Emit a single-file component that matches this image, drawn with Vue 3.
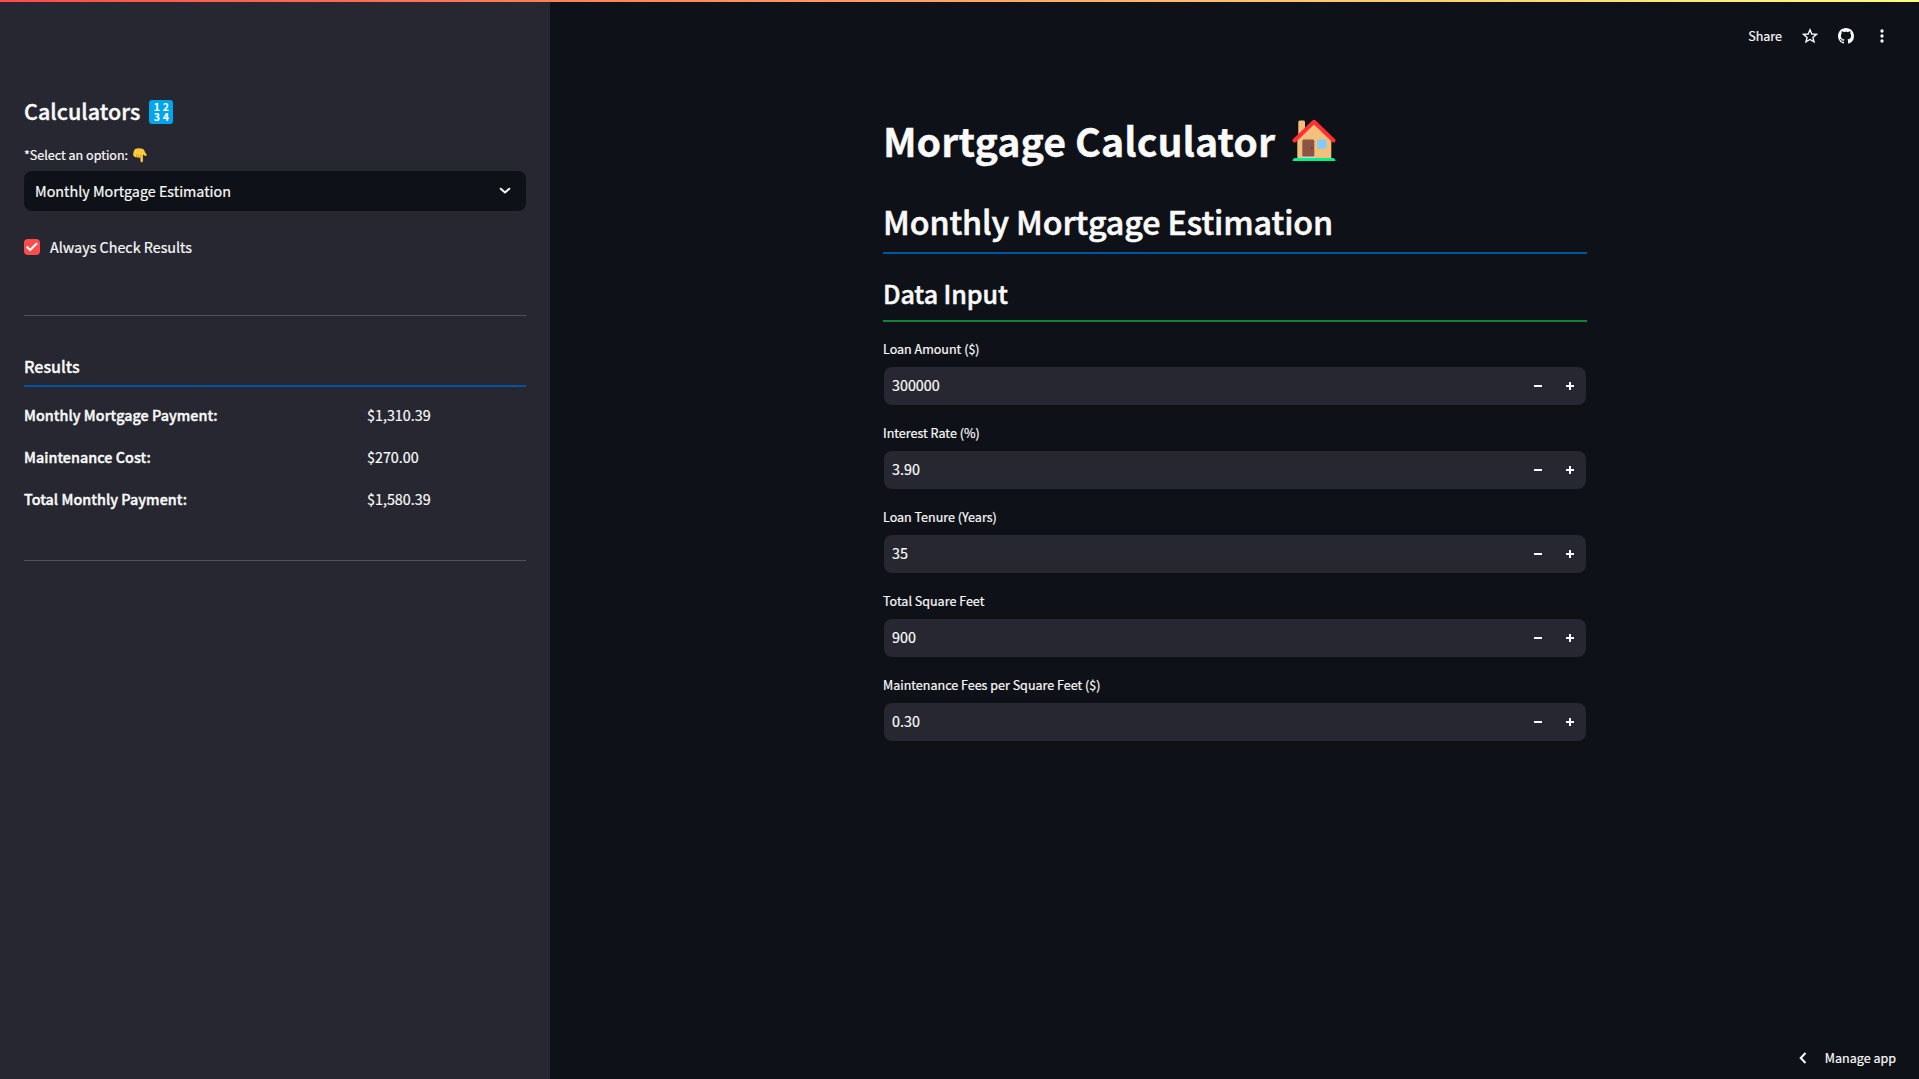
<script setup>
import { ref } from 'vue'

const results = [
  { name: 'Monthly Mortgage Payment:', value: '$1,310.39' },
  { name: 'Maintenance Cost:', value: '$270.00' },
  { name: 'Total Monthly Payment:', value: '$1,580.39' },
]

const fields = ref([
  { label: 'Loan Amount ($)', value: '300000' },
  { label: 'Interest Rate (%)', value: '3.90' },
  { label: 'Loan Tenure (Years)', value: '35' },
  { label: 'Total Square Feet', value: '900' },
  { label: 'Maintenance Fees per Square Feet ($)', value: '0.30' },
])
</script>

<template>
  <div class="app">
    <aside class="sidebar">
      <h2 class="side-title">
        <span>Calculators</span>
        <span class="keypad"><i>1</i><i>2</i><i>3</i><i>4</i></span>
      </h2>
      <div class="side-label">
        <span>*Select an option:</span>
        <svg class="hand" viewBox="0 0 14 15">
          <path fill="#ffc83d" d="M2.6 .8C4.2 0 7.4-.1 9.4.7c1.5.6 2 1.8 2.4 3l1.6 2.5c.7 1.2-.5 2.2-1.5 1.5L9.9 6.400V13c0 1.8-2.300 1.800-2.400 0L7.300 9.200C6.900 10.100 5.700 10 5.400 9.300 4.900 9.800 3.800 9.700 3.500 9 2.700 9.500 1.500 9.200 1.300 8.300.3 8.100 0 7.200.2 6.200.5 4.200.8 1.800 2.600.8z" />
          <path fill="none" stroke="#d67d00" stroke-width=".6" d="M3.500 8.800V6.600M5.500 9.100V6.800M7.500 9.300V7.200" />
        </svg>
      </div>
      <div class="select">
        <span>Monthly Mortgage Estimation</span>
        <svg width="12" height="8" viewBox="0 0 12 8"><path d="M1.700 1.700 6 5.500l4.300-3.800" fill="none" stroke="#fafafa" stroke-width="2" stroke-linecap="round" /></svg>
      </div>
      <label class="check">
        <span class="box"><svg width="16" height="16" viewBox="0 0 16 16"><path d="M2.700 7.600 6.200 11 13 4.200" fill="none" stroke="#fafafa" stroke-width="2.200" /></svg></span>
        <span>Always Check Results</span>
      </label>
      <hr class="rule first">
      <h4 class="results">Results</h4>
      <div class="rows">
        <div v-for="r in results" :key="r.name" class="row">
          <strong>{{ r.name }}</strong><span>{{ r.value }}</span>
        </div>
      </div>
      <hr class="rule second">
    </aside>

    <main class="main">
      <header class="toolbar">
        <span class="share">Share</span>
        <svg class="star" width="16" height="16" viewBox="0 0 16 16"><path d="M8 1.800 9.800 6l4.600.4-3.500 3 1.100 4.500L8 11.500l-4 2.400 1.100-4.500-3.500-3L6.200 6z" fill="none" stroke="#fafafa" stroke-width="1.400" /></svg>
        <svg class="github" width="16" height="16" viewBox="0 0 16 16"><path fill="#fafafa" d="M8 0C3.580 0 0 3.580 0 8c0 3.540 2.290 6.530 5.470 7.590.4.070.55-.17.55-.38 0-.19-.01-.82-.01-1.490-2.010.37-2.530-.49-2.690-.94-.09-.23-.48-.94-.82-1.130-.28-.15-.68-.52-.01-.53.63-.01 1.080.58 1.230.82.72 1.210 1.870.87 2.330.66.07-.52.28-.87.51-1.070-1.780-.2-3.640-.89-3.640-3.950 0-.87.31-1.590.82-2.150-.08-.2-.36-1.020.08-2.120 0 0 .67-.21 2.200.82.64-.18 1.320-.27 2-.27s1.360.09 2 .27c1.530-1.040 2.200-.82 2.200-.82.44 1.100.16 1.920.08 2.120.51.56.82 1.270.82 2.150 0 3.070-1.870 3.750-3.650 3.950.29.25.54.73.54 1.480 0 1.070-.01 1.930-.01 2.200 0 .21.15.46.55.38A8.010 8.010 0 0 0 16 8c0-4.420-3.580-8-8-8z" /></svg>
        <svg class="dots" width="4" height="16" viewBox="0 0 4 16" fill="#fafafa"><circle cx="2" cy="3" r="1.650" /><circle cx="2" cy="8" r="1.650" /><circle cx="2" cy="13" r="1.650" /></svg>
      </header>

      <section class="content">
        <h1 class="title">
          <span>Mortgage Calculator</span>
          <svg class="house" width="44" height="43" viewBox="0 0 44 43">
            <path fill="#f3c07b" d="M6.300 3Q6.300 1.500 7.800 1.500h3.800Q13 1.500 13 3v12H6.300z" />
            <path fill="#f3c07b" d="M5.300 20 22 3.500 39.300 20v19.500H5.300z" />
            <path fill="none" stroke="#ff3034" stroke-width="4" stroke-linecap="round" stroke-linejoin="round" d="M2.500 21.500 22 2.800l19.500 18.700" />
            <rect x="10.300" y="20.500" width="12" height="18" rx="1.500" fill="#8c5543" />
            <circle cx="19.800" cy="29" r=".8" fill="#402a32" />
            <rect x="25.300" y="20.500" width="9" height="9.200" rx="1" fill="#83cbff" />
            <path fill="#d3d3d3" d="M9.300 37.500h14v2h-14z" />
            <path fill="#00f08c" d="M2.500 39h39q2 .8 2 3h-43q0-2.200 2-3z" />
          </svg>
        </h1>
        <h2 class="heading">Monthly Mortgage Estimation</h2>
        <h3 class="subheading">Data Input</h3>
        <form class="fields">
          <div v-for="f in fields" :key="f.label" class="field">
            <label>{{ f.label }}</label>
            <div class="number">
              <span class="value">{{ f.value }}</span>
              <svg width="8" height="8" viewBox="0 0 8 8"><path d="M0 3h8v2H0z" fill="#fafafa" /></svg>
              <svg width="8" height="8" viewBox="0 0 8 8"><path d="M0 3h3V0h2v3h3v2H5v3H3V5H0z" fill="#fafafa" /></svg>
            </div>
          </div>
        </form>
      </section>

      <footer class="manage">
        <svg width="8" height="12" viewBox="0 0 8 12"><path d="M6.500 1 1.700 6l4.800 5" fill="none" stroke="#fafafa" stroke-width="2" /></svg>
        <span>Manage app</span>
      </footer>
    </main>
    <div class="decoration"></div>
  </div>
</template>

<style>
body {
  margin: 0;
  background: #0e1117;
}
</style>

<style scoped>
.app {
  display: flex;
  position: relative;
  width: 100%;
  height: 100vh;
  overflow: hidden;
  box-sizing: border-box;
  background: #0e1117;
  color: #fafafa;
  font-family: "Noto Sans CJK SC", "Noto Sans", sans-serif;
  font-size: 14.330px;
  line-height: 24px;
  white-space: nowrap;
  -webkit-text-stroke: .2px #fafafa;
}
.app * { box-sizing: border-box; }
h1, h2, h3, h4, strong {
  margin: 0;
  font-weight: 500;
  letter-spacing: -.003em;
  -webkit-text-stroke: .018em #fafafa;
}
svg { display: block; flex: none; }
.decoration {
  position: absolute;
  inset: 0 0 auto;
  height: 2px;
  background: linear-gradient(90deg, #ff4b4b, #fffd80);
}
.sidebar {
  flex: none;
  width: 550px;
  padding: 96px 24px 0;
  background: #262730;
}
.side-title {
  display: flex;
  align-items: center;
  gap: 9px;
  height: 29px;
  font-size: 21.500px;
  letter-spacing: .04px;
  line-height: 29px;
}
.keypad {
  display: grid;
  grid-template-columns: 8px 8px;
  grid-template-rows: 9.500px 9.500px;
  justify-content: center;
  align-content: center;
  column-gap: 1px;
  width: 24px;
  height: 24px;
  margin-top: 2px;
  border-radius: 3px;
  background: #00a6ed;
  color: #fff;
  font-size: 10.500px;
  letter-spacing: 0;
  line-height: 9.500px;
  text-align: center;
  -webkit-text-stroke: .1px #fff;
}
.keypad i { font-style: normal; font-weight: 700; }
.side-label {
  display: flex;
  align-items: center;
  gap: 5px;
  height: 20px;
  margin-top: 20px;
  font-size: 12.540px;
  line-height: 20px;
}
.hand { width: 14px; height: 15px; }
.select {
  display: flex;
  align-items: center;
  justify-content: space-between;
  height: 40px;
  margin-top: 6px;
  padding: 0 15px 0 11px;
  border-radius: 8px;
  background: #0e1117;
}
.check { display: flex; align-items: center; gap: 10px; height: 24px; margin-top: 24px; }
.box { width: 16px; height: 16px; border-radius: 4px; background: #ff4b4b; }
.rule { height: 1px; margin: 0; border: 0; background: #515259; }
.first { margin-top: 56px; }
.results {
  height: 35px;
  margin-top: 36px;
  border-bottom: 2px solid #0054a3;
  font-size: 16.100px;
  line-height: 28px;
}
.rows { display: flex; flex-direction: column; gap: 18px; margin-top: 16px; }
.row { display: grid; grid-template-columns: 343px 1fr; height: 24px; }
.row strong { letter-spacing: .045px; -webkit-text-stroke: .4px #fafafa; }
.second { margin-top: 49px; }
.main { display: flex; flex: 1; flex-direction: column; }
.toolbar {
  display: flex;
  align-items: center;
  justify-content: flex-end;
  height: 72px;
  padding-right: 35px;
  font-size: 12.540px;
}
.share { margin-right: 20px; }
.star { margin-right: 20px; }
.github { margin-right: 26px; }
.content { width: 704px; margin: 41px 0 0 333px; }
.title {
  display: flex;
  align-items: center;
  gap: 17px;
  height: 53px;
  font-size: 39.400px;
  font-weight: 700;
  letter-spacing: 0;
  line-height: 53px;
  -webkit-text-stroke: .3px #fafafa;
}
.house { margin-top: 2px; }
.heading {
  height: 60px;
  margin-top: 28px;
  border-bottom: 2px solid #0054a3;
  font-size: 32.240px;
  line-height: 54px;
}
.subheading {
  height: 46px;
  margin-top: 22px;
  border-bottom: 2px solid #158237;
  font-size: 25.080px;
  line-height: 34px;
}
.fields { display: flex; flex-direction: column; gap: 18px; margin: 17px 1px 0; }
.field { display: flex; flex-direction: column; height: 66px; }
.field label { height: 28px; margin-left: -1px; font-size: 12.540px; line-height: 20px; }
.number {
  display: flex;
  align-items: center;
  gap: 24px;
  height: 38px;
  padding: 0 12px 0 8px;
  border-radius: 8px;
  background: #262730;
}
.value { flex: 1; margin-top: -2px; }
.manage {
  display: flex;
  align-items: center;
  justify-content: flex-end;
  gap: 18px;
  height: 42px;
  margin-top: auto;
  padding-right: 23px;
  font-size: 12.540px;
}
</style>
